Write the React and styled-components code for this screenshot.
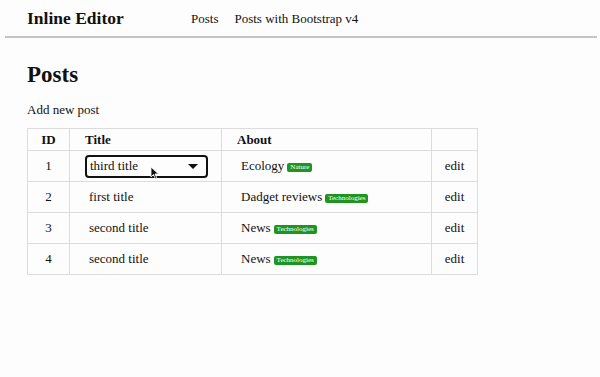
import React from "react";
import styled, { createGlobalStyle } from "styled-components";

const Global = createGlobalStyle`
  html, body { margin: 0; padding: 0; background: #fefdfe; }
  body { font-family: "Liberation Serif", "Times New Roman", serif; color: #111; font-size: 13px; }
`;

const Page = styled.div`
  width: 600px;
  height: 377px;
  overflow: hidden;
`;

const Header = styled.header`
  display: flex;
  align-items: center;
  height: 36px;
  margin: 0 3px 0 5px;
  padding-left: 22px;
  border-bottom: 2px solid #c4c4c4;
  box-sizing: content-box;
`;

const Brand = styled.div`
  font-weight: bold;
  font-size: 17.5px;
  width: 164px;
  margin-top: 1px;
`;

const Nav = styled.nav`
  display: flex;
  gap: 16px;
  font-size: 13px;
  margin-top: 2px;
`;

const Main = styled.main`
  padding: 0 27px;
`;

const Title = styled.h1`
  font-size: 23px;
  font-weight: bold;
  margin: 24px 0 0;
  line-height: 26px;
`;

const AddLink = styled.div`
  margin-top: 14px;
  font-size: 13px;
  line-height: 16px;
`;

const Table = styled.table`
  margin-top: 10px;
  border-collapse: collapse;
  width: 450px;
  font-size: 13px;
  table-layout: fixed;
`;

const Th = styled.th`
  box-sizing: border-box;
  border: 1px solid #dcdcdc;
  height: 22px;
  padding: 0 0 0 ${(p) => p.$pl || 0}px;
  text-align: ${(p) => p.$align || "left"};
  font-weight: bold;
  width: ${(p) => p.$w}px;
`;

const Td = styled.td`
  box-sizing: border-box;
  border: 1px solid #dcdcdc;
  height: 31px;
  padding: 0 0 0 ${(p) => p.$pl || 0}px;
  text-align: ${(p) => p.$align || "left"};
  vertical-align: middle;
`;

const SelectBox = styled.div`
  display: flex;
  align-items: center;
  justify-content: space-between;
  border: 2px solid #111;
  border-radius: 4px;
  padding: 0 8px 0 3px;
  box-sizing: border-box;
  width: 123px;
  height: 23px;
  position: relative;
`;

const Caret = styled.span`
  width: 0;
  height: 0;
  border-left: 5px solid transparent;
  border-right: 5px solid transparent;
  border-top: 5px solid #111;
`;

const Cursor = styled.svg`
  position: absolute;
  left: 63px;
  top: 9px;
`;

const Badge = styled.span`
  display: inline-block;
  background: #1f9521;
  color: #fff;
  font-size: 7px;
  line-height: 9px;
  padding: 0 3px;
  border-radius: 2px;
  margin-left: 3px;
  vertical-align: 1px;
`;

const rows = [
  { id: 1, title: "third title", about: "Ecology", tag: "Nature", editing: true },
  { id: 2, title: "first title", about: "Dadget reviews", tag: "Technologies" },
  { id: 3, title: "second title", about: "News", tag: "Technologies" },
  { id: 4, title: "second title", about: "News", tag: "Technologies" },
];

export default function App() {
  return (
    <Page>
      <Global />
      <Header>
        <Brand>Inline Editor</Brand>
        <Nav>
          <span>Posts</span>
          <span>Posts with Bootstrap v4</span>
        </Nav>
      </Header>
      <Main>
        <Title>Posts</Title>
        <AddLink>Add new post</AddLink>
        <Table>
          <thead>
            <tr>
              <Th $w={42} $align="center">ID</Th>
              <Th $w={152} $pl={15}>Title</Th>
              <Th $w={210} $pl={15}>About</Th>
              <Th $w={46}></Th>
            </tr>
          </thead>
          <tbody>
            {rows.map((r) => (
              <tr key={r.id}>
                <Td $align="center">{r.id}</Td>
                <Td $pl={r.editing ? 15 : 19}>
                  {r.editing ? (
                    <SelectBox>
                      <span>{r.title}</span>
                      <Caret />
                      <Cursor width="10" height="14" viewBox="0 0 10 14">
                        <path d="M1 1 L1 11 L3.5 8.5 L5.5 13 L7 12.3 L5 8 L8.5 8 Z" fill="#111" stroke="#fff" strokeWidth="0.8" />
                      </Cursor>
                    </SelectBox>
                  ) : (
                    r.title
                  )}
                </Td>
                <Td $pl={19}>
                  {r.about}
                  <Badge>{r.tag}</Badge>
                </Td>
                <Td $align="center">edit</Td>
              </tr>
            ))}
          </tbody>
        </Table>
      </Main>
    </Page>
  );
}
